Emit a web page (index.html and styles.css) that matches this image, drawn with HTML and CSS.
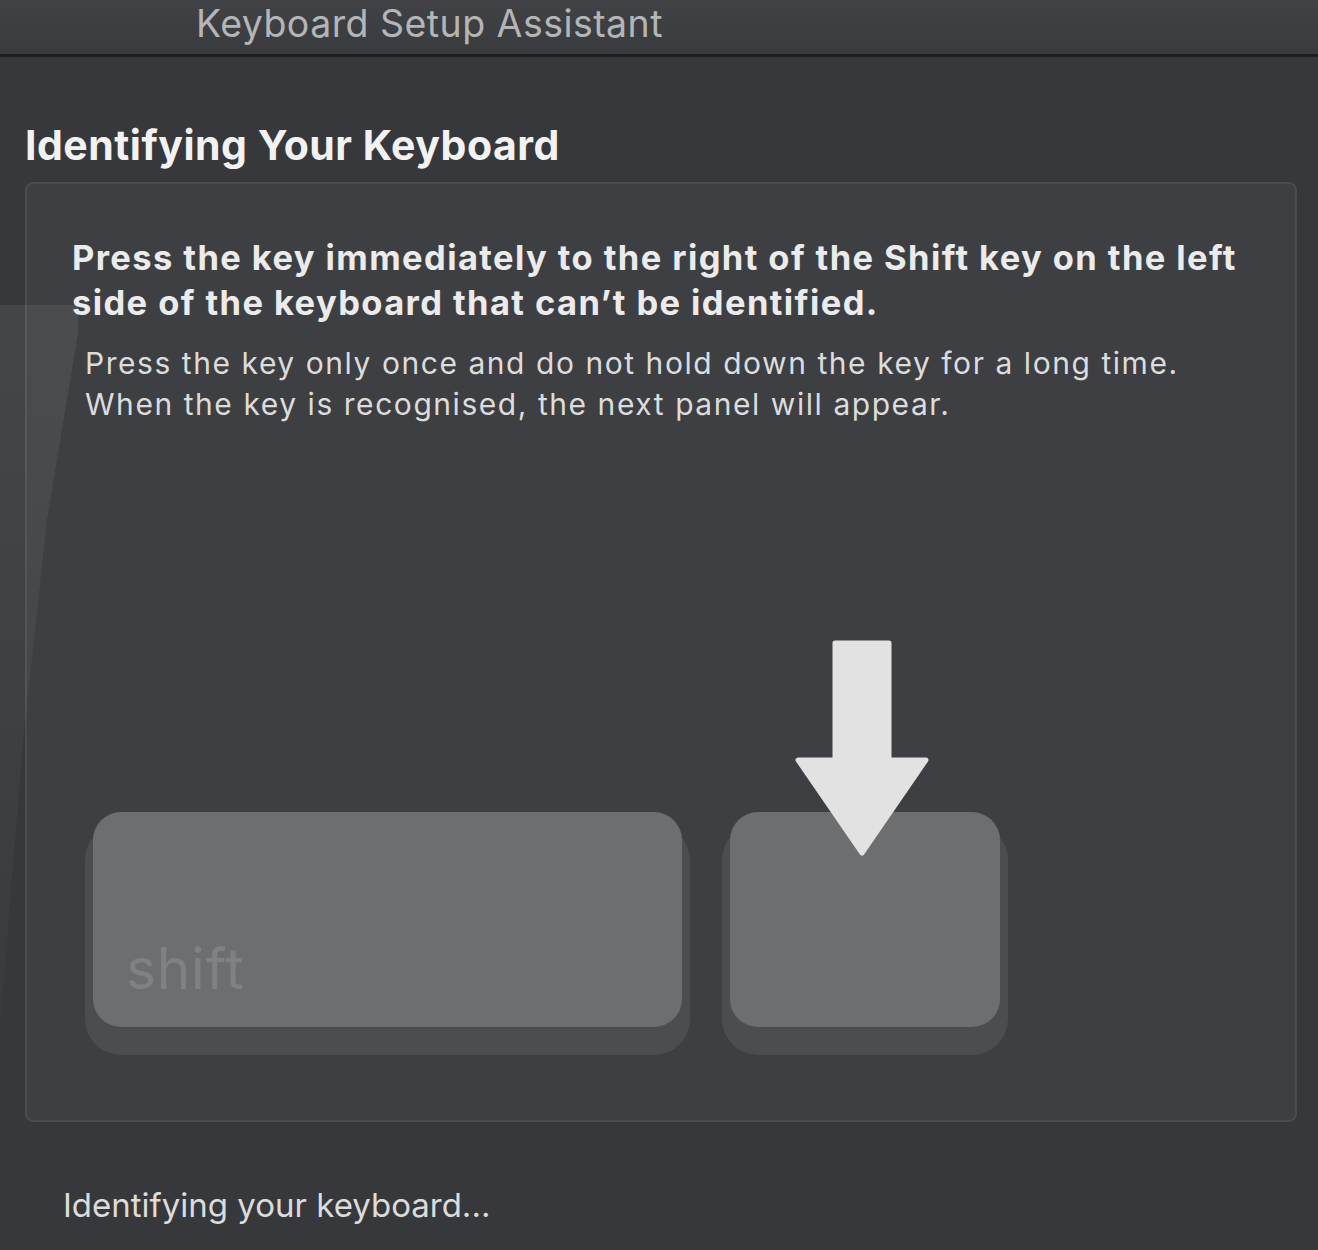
FILE: index.html
```html
<!DOCTYPE html>
<html lang="en">
<head>
    <meta charset="UTF-8">
    <meta name="viewport" content="width=device-width, initial-scale=1.0">
    <title>Keyboard Setup Assistant</title>
    <link rel="stylesheet" href="styles.css">
</head>
<body>
    <!-- faint wallpaper reflection on the left edge -->
    <div class="glare"></div>

    <div class="titlebar">Keyboard Setup Assistant</div>

    <div class="main">
        <h1>Identifying Your Keyboard</h1>

        <div class="panel">
            <p class="prompt">Press the key immediately to the right of the Shift key on the left<br>side of the keyboard that can’t be identified.</p>
            <p class="hint">Press the key only once and do not hold down the key for a long time.<br>When the key is recognised, the next panel will appear.</p>

            <div class="keys">
                <div class="key shift"><span>shift</span></div>
                <div class="key target">
                    <svg class="arrow" width="134" height="216" viewBox="0 0 134 216">
                        <path d="M40 3 H94 V120 H131 L67 213 L3 120 H40 Z" fill="#e2e2e3" stroke="#e2e2e3" stroke-width="5" stroke-linejoin="round"/>
                    </svg>
                </div>
            </div>
        </div>

        <div class="status">Identifying your keyboard...</div>
    </div>
</body>
</html>
```

FILE: styles.css
```css
body{
    margin: 0;
    background-color: #37383b;
    font-family: Inter, "Liberation Sans", Arial, sans-serif;
    color: #e6e6e6;
    position: relative;
    min-height: 1250px;
}
.glare{
    position: absolute;
    left: 0;
    top: 305px;
    width: 78px;
    height: 720px;
    background: linear-gradient(180deg, rgba(255,255,255,0.07), rgba(255,255,255,0.015));
    clip-path: polygon(0 0, 100% 0, 100% 4%, 60% 30%, 30% 60%, 0 100%);
    pointer-events: none;
    z-index: 1;
}
.titlebar{
    height: 54px;
    line-height: 48px;
    padding-left: 196px;
    font-size: 37.5px;
    letter-spacing: 0.45px;
    color: #b4b5b7;
    background: linear-gradient(180deg, #414245, #3a3b3e);
    border-bottom: 3px solid #1d1e20;
}
.main{
    padding: 0 21px 0 25px;
}
h1{
    margin: 0;
    padding-top: 65px;
    font-size: 41px;
    line-height: 46px;
    font-weight: bold;
    letter-spacing: 0.5px;
    color: #f2f2f2;
}
.panel{
    margin-top: 14px;
    height: 940px;
    box-sizing: border-box;
    border: 2px solid #4b4c4f;
    border-radius: 8px;
    background-color: #3e3f42;
    padding: 51px 20px 0 45px;
}
.prompt{
    margin: 0;
    font-size: 34.5px;
    line-height: 45px;
    font-weight: bold;
    letter-spacing: 1.4px;
    color: #ebebeb;
    white-space: nowrap;
}
.hint{
    margin: 18px 0 0 13px;
    font-size: 30px;
    line-height: 41px;
    letter-spacing: 1.55px;
    color: #dcdcdc;
    white-space: nowrap;
}
.keys{
    display: flex;
    gap: 48px;
    margin-top: 387px;
    padding-left: 21px;
}
.key{
    position: relative;
    height: 215px;
    border-radius: 28px;
    background-color: #6d6e70;
    box-shadow: 0 20px 0 8px #4c4d50, 0 10px 0 1px #5a5b5d;
}
.shift{
    width: 589px;
}
.shift span{
    position: absolute;
    left: 33px;
    bottom: 24px;
    font-size: 57px;
    letter-spacing: 0.6px;
    color: #808183;
}
.target{
    width: 270px;
}
.arrow{
    position: absolute;
    left: 65px;
    top: -172px;
    z-index: 2;
}
.status{
    margin-top: 63px;
    padding-left: 38px;
    font-size: 33px;
    color: #dcdcdc;
}
```
